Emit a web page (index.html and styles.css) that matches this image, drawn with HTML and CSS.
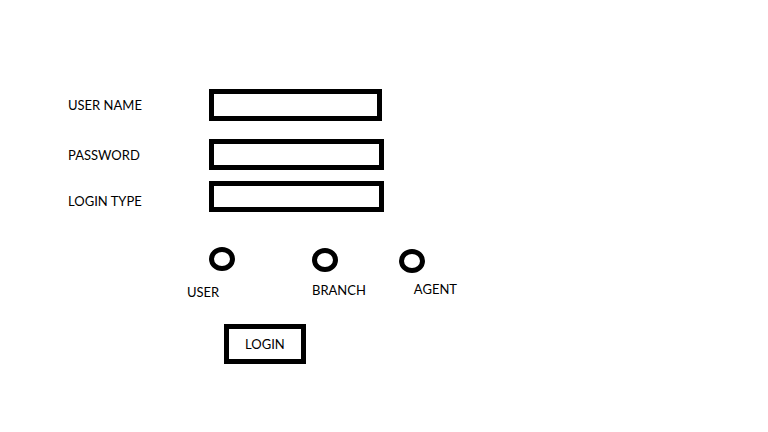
FILE: index.html
```html
<!DOCTYPE html>
<html lang="en">
<head>
<meta charset="utf-8">
<meta name="viewport" content="width=device-width, initial-scale=1">
<title>Login</title>
<link rel="stylesheet" href="styles.css">
</head>
<body>
<form class="login">
  <div class="fields">
    <div class="field field-first">
      <label for="username">USER NAME</label>
      <input class="box" id="username" type="text">
    </div>
    <div class="field">
      <label for="password">PASSWORD</label>
      <input class="box" id="password" type="password">
    </div>
    <div class="field field-low">
      <label for="type">LOGIN TYPE</label>
      <input class="box" id="type" type="text">
    </div>
  </div>
  <div class="options">
    <div class="option option-user">
      <input class="radio" id="user" type="radio" name="role">
      <label for="user">USER</label>
    </div>
    <div class="option">
      <input class="radio" id="branch" type="radio" name="role">
      <label for="branch">BRANCH</label>
    </div>
    <div class="option option-agent">
      <input class="radio" id="agent" type="radio" name="role">
      <label for="agent">AGENT</label>
    </div>
  </div>
  <button class="submit" type="button">LOGIN</button>
</form>
</body>
</html>
```

FILE: styles.css
```css
* {
  box-sizing: border-box;
}

body {
  margin: 0;
  background: #fff;
  color: #000;
  font: 13px/16px Lato, "Open Sans", sans-serif;
}

.login {
  padding: 89px 24px 24px 68px;
}

.field {
  display: grid;
  grid-template-columns: 141px minmax(0, 175px);
  align-items: center;
  margin-bottom: 11px;
}

.field-first {
  grid-template-columns: 141px minmax(0, 173px);
  margin-bottom: 18px;
}

.field-first .box {
  height: 32px;
}

.field-low {
  align-items: end;
  margin-bottom: 0;
}

.field-low label {
  padding-bottom: 3px;
}

.box {
  width: 100%;
  height: 31px;
  margin: 0;
  padding: 0 6px;
  border: 5px solid #000;
  border-radius: 0;
  background: #fff;
  color: inherit;
  font: inherit;
  outline: none;
}

.options {
  display: grid;
  grid-template-columns: 125px 87px auto;
  align-items: start;
  justify-content: start;
  margin: 35px 0 0 119px;
}

.option {
  display: grid;
  justify-items: start;
  gap: 10px;
  padding-top: 1px;
}

.option-user {
  width: 48px;
  gap: 13px;
  padding-top: 0;
}

.option-user .radio {
  justify-self: end;
}

.option-agent {
  width: 58px;
  gap: 8px;
  padding-top: 2px;
}

.option-agent label {
  justify-self: end;
}

.radio {
  appearance: none;
  width: 26px;
  height: 24px;
  margin: 0;
  border: 5px solid #000;
  border-radius: 50%;
  background: #fff;
}

.radio:checked {
  background: #000;
}

.submit {
  display: block;
  height: 40px;
  margin: 24px 0 0 156px;
  padding: 0 16px;
  border: 5px solid #000;
  border-radius: 0;
  background: #fff;
  color: inherit;
  font: inherit;
}
```
